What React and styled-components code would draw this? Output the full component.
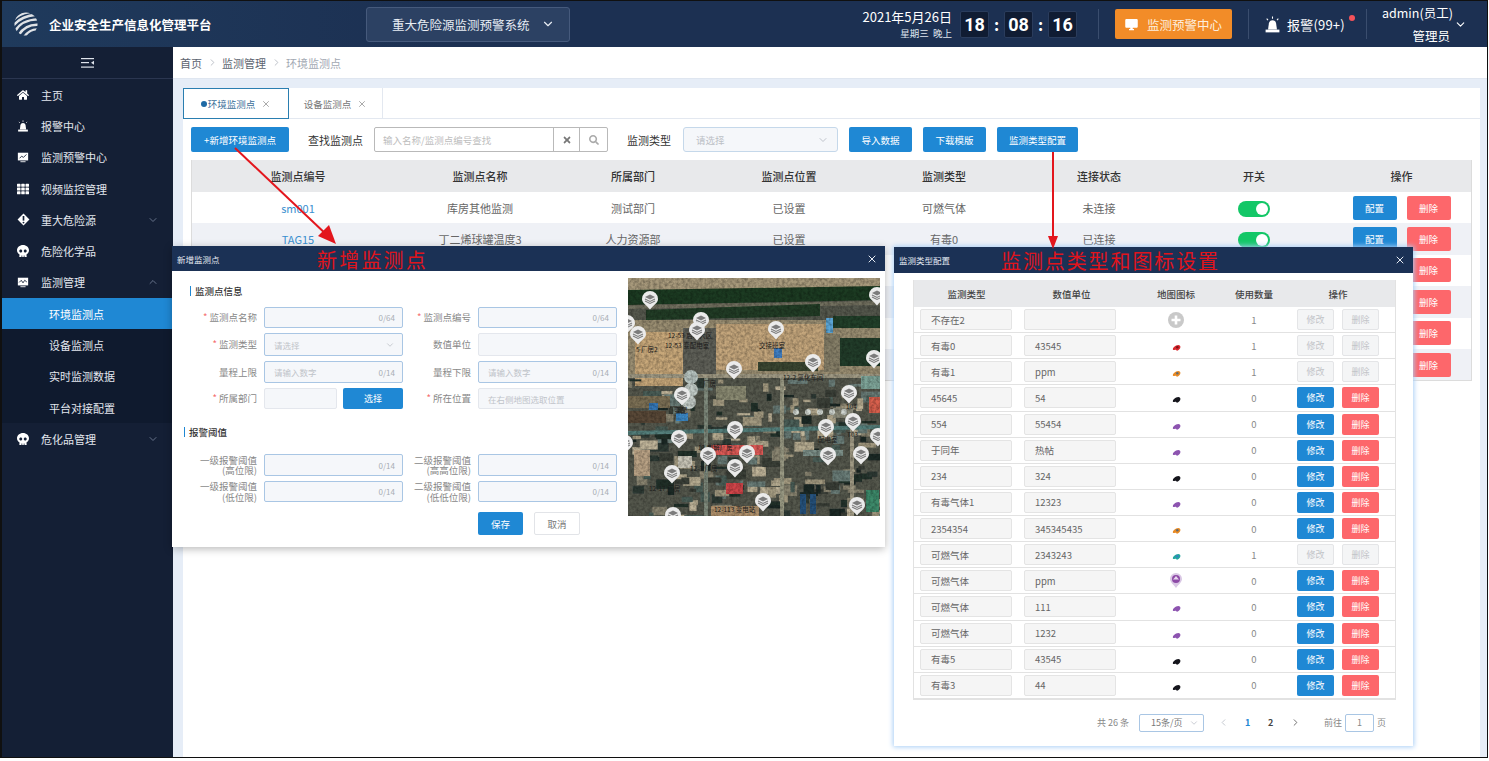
import React from 'react'
import styled, { createGlobalStyle } from 'styled-components'
import { FaHome, FaSkull, FaTh, FaSearch, FaTimes } from 'react-icons/fa'
import { FiChevronDown, FiChevronUp, FiChevronLeft, FiChevronRight, FiX } from 'react-icons/fi'
import { MdDesktopWindows } from 'react-icons/md'

const GlobalStyle = createGlobalStyle`
  html, body {
    margin: 0;
    padding: 0;
    background: #fff;
    font-family: "Noto Sans CJK SC", "Noto Sans", sans-serif;
  }
  * { box-sizing: border-box; }
`

const blue = '#1f88d4'
const red = '#fd676b'
const navy = '#1b3155'

const Frame = styled.div`
  position: relative;
  width: 1488px;
  height: 758px;
  border: 1px solid #101010;
  border-left-width: 2px;
  overflow: hidden;
  background: #e6edf7;
  display: flex;
  flex-direction: column;
`

/* ---------- top bar ---------- */
const TopBar = styled.header`
  height: 46px;
  flex: none;
  display: flex;
  align-items: center;
  background: linear-gradient(90deg, #1f3a5c 0%, #1c3052 30%, #1c3052 100%);
  color: #fff;
`
const Brand = styled.div`
  width: 364px;
  display: flex;
  align-items: center;
  gap: 11px;
  padding-left: 12px;
  font-size: 12.5px;
  font-weight: 700;
`
const SystemPicker = styled.div`
  width: 204px;
  height: 35px;
  display: flex;
  align-items: center;
  justify-content: space-between;
  padding: 0 14px 0 25px;
  font-size: 12.5px;
  background: #2c4163;
  border: 1px solid #465a7c;
  border-radius: 3px;
  color: #e8edf4;
`
const TopRight = styled.div`
  margin-left: auto;
  display: flex;
  align-items: center;
  height: 100%;
`
const DateBlock = styled.div`
  width: 90px;
  text-align: right;
  line-height: 1;
`
const DateText = styled.div`
  font-size: 13px;
  white-space: nowrap;
`
const WeekText = styled.div`
  font-size: 9.5px;
  margin-top: 6px;
  color: #dfe5ee;
`
const Clock = styled.div`
  display: flex;
  align-items: center;
  margin-left: 8px;
  margin-right: 21px;
`
const Digit = styled.span`
  width: 29px;
  height: 27px;
  display: flex;
  align-items: center;
  justify-content: center;
  background: #101c33;
  border: 1px solid #2a3c5c;
  border-radius: 2px;
  font-family: "Roboto", sans-serif;
  font-size: 18px;
  font-weight: 700;
`
const Colon = styled.span`
  width: 15px;
  text-align: center;
  font-size: 16px;
  font-weight: 700;
`
const Divider = styled.span`
  width: 1px;
  height: 30px;
  background: #3a4d6e;
`
const AlarmCenter = styled.div`
  width: 117px;
  height: 30px;
  margin: 0 16px;
  display: flex;
  align-items: center;
  gap: 8px;
  padding-left: 9px;
  background: #f28c28;
  border-radius: 2px;
  font-size: 12.5px;
  color: #fdeedd;
`
const AlarmBadge = styled.div`
  position: relative;
  width: 117px;
  display: flex;
  align-items: center;
  gap: 6px;
  padding-left: 15px;
  font-size: 13px;
  letter-spacing: 0.2px;
  &::after {
    content: '';
    position: absolute;
    left: 100px;
    top: 0;
    width: 6px;
    height: 6px;
    border-radius: 50%;
    background: #f4525a;
  }
`
const UserBox = styled.div`
  width: 120px;
  padding-left: 15px;
  display: flex;
  align-items: center;
  gap: 4px;
`
const UserNames = styled.div`
  width: 68px;
  font-size: 12.5px;
  text-align: right;
  line-height: 23px;
  white-space: nowrap;
`

/* ---------- page body ---------- */
const Body = styled.div`
  flex: 1;
  display: flex;
  min-height: 0;
`
const Sidebar = styled.nav`
  width: 171px;
  flex: none;
  background: #141f35;
  color: #e3e7ee;
`
const Collapse = styled.div`
  height: 32px;
  display: flex;
  align-items: center;
  justify-content: center;
  border-bottom: 1px solid #2b3650;
`
const MenuItem = styled.div`
  height: 31.3px;
  display: flex;
  align-items: center;
  padding-left: ${p => (p.$sub ? 47 : 15)}px;
  padding-right: 14px;
  font-size: 11px;
  background: ${p => (p.$active ? blue : p.$sub ? '#0f1a2e' : 'transparent')};
  color: ${p => (p.$active ? '#fff' : '#e3e7ee')};
`
const MenuIcon = styled.span`
  width: 24px;
  display: flex;
  align-items: center;
  font-size: 12px;
  color: #fff;
`
const MenuArrow = styled.span`
  margin-left: auto;
  display: flex;
  color: #66728a;
  font-size: 12px;
`
const Main = styled.main`
  flex: 1;
  min-width: 0;
  display: flex;
  flex-direction: column;
`
const Breadcrumb = styled.div`
  height: 32px;
  flex: none;
  background: #fff;
  display: flex;
  align-items: center;
  gap: 4.5px;
  padding-left: 7px;
  font-size: 11px;
  color: #5c6470;
  border-bottom: 1px solid #dfe6f0;
`
const Crumb = styled.span`
  color: ${p => (p.$last ? '#a2a8b2' : '#5c6470')};
`
const Sep = styled.span`
  display: flex;
  color: #b8bcc4;
  font-size: 11px;
`
const Content = styled.div`
  flex: 1;
  margin: 9px 7px 0 10px;
  display: flex;
  flex-direction: column;
  min-height: 0;
`
const TabBar = styled.div`
  height: 31px;
  flex: none;
  display: flex;
  background: #fff;
  border-bottom: 1px solid #e3e8f0;
`
const Tab = styled.div`
  width: ${p => p.$w}px;
  height: 31px;
  display: flex;
  align-items: center;
  justify-content: center;
  gap: 6px;
  font-size: 9.5px;
  color: ${p => (p.$active ? '#3b6f99' : '#777')};
  border: ${p => (p.$active ? '1px solid #2a7eb0' : 'none')};
  border-right: 1px solid ${p => (p.$active ? '#2a7eb0' : '#e3e8f0')};
  svg { color: #999; font-size: 10px; }
  &::before {
    content: '';
    display: ${p => (p.$active ? 'block' : 'none')};
    width: 6px;
    height: 6px;
    margin-right: -5px;
    border-radius: 50%;
    background: #1f6aa5;
  }
`
const Panel = styled.section`
  flex: 1;
  background: #fff;
  padding: 8px 9px 0 8px;
`
const Toolbar = styled.div`
  height: 25px;
  display: flex;
  align-items: center;
`
const Btn = styled.button`
  width: ${p => p.$w}px;
  height: ${p => p.$h || 25}px;
  flex: none;
  margin-left: ${p => p.$ml || 0}px;
  padding: 0;
  border: none;
  border-radius: 2px;
  background: ${p => (p.$danger ? red : blue)};
  color: #fff;
  font-family: inherit;
  font-size: ${p => p.$fs || 9.5}px;
  visibility: ${p => (p.$hidden ? 'hidden' : 'visible')};
`
const GhostBtn = styled(Btn)`
  background: #f4f5f6;
  color: #c2c4c8;
  border: 1px solid #e4e5e7;
`
const ToolLabel = styled.span`
  margin-left: ${p => p.$ml}px;
  width: ${p => p.$w}px;
  flex: none;
  font-size: 11px;
  color: #333;
  white-space: nowrap;
`
const SearchBox = styled.div`
  width: 234px;
  height: 25px;
  display: flex;
  border: 1px solid #b9b9b9;
  border-radius: 2px;
`
const SearchInput = styled.div`
  flex: 1;
  display: flex;
  align-items: center;
  padding-left: 8px;
  font-size: 9.5px;
  color: #bdbdbd;
`
const SearchAddon = styled.div`
  width: ${p => p.$w}px;
  display: flex;
  align-items: center;
  justify-content: center;
  border-left: 1px solid #b9b9b9;
  color: ${p => p.$c};
  font-size: 10px;
`
const TypeSelect = styled.div`
  width: 155px;
  height: 25px;
  margin-left: 12px;
  display: flex;
  align-items: center;
  justify-content: space-between;
  padding: 0 8px 0 12px;
  background: #f5f7fa;
  border: 1px solid #c5d8ea;
  border-radius: 3px;
  font-size: 9.5px;
  color: #bcc0c6;
  svg { font-size: 12px; }
`
const MonitorTable = styled.div`
  margin-top: 8px;
  border: 1px solid #dcdcdc;
  border-top: none;
  width: 1281px;
`
const MonitorRow = styled.div`
  display: grid;
  grid-template-columns: 212px 152px 154px 158px 152px 158px 152px 143px;
  height: ${p => (p.$head ? 32 : 31.4)}px;
  align-items: center;
  text-align: center;
  font-size: 11px;
  font-weight: ${p => (p.$head ? 500 : 400)};
  color: ${p => (p.$head ? '#333' : '#666')};
  background: ${p => (p.$head ? '#e8e9eb' : p.$alt ? '#eff1f6' : '#fff')};
`
const LinkCell = styled.span`
  color: #3a8fcf;
`
const Actions = styled.div`
  display: flex;
  justify-content: center;
  gap: 10px;
`
const Toggle = styled.span`
  display: inline-block;
  position: relative;
  width: 32px;
  height: 16px;
  border-radius: 8px;
  background: #13c767;
  vertical-align: middle;
  &::after {
    content: '';
    position: absolute;
    right: 2px;
    top: 2px;
    width: 12px;
    height: 12px;
    border-radius: 50%;
    background: #fff;
  }
`

/* ---------- dialogs ---------- */
const Dialog = styled.div`
  position: absolute;
  left: ${p => p.$x}px;
  top: ${p => p.$y}px;
  width: ${p => p.$w}px;
  height: ${p => p.$h}px;
  background: #fff;
  box-shadow: ${p => p.$glow ? '0 0 5px 1px #a9cff6' : '0 2px 8px rgba(0,0,0,.28)'};
  display: flex;
  flex-direction: column;
  z-index: 2;
`
const DialogHead = styled.div`
  height: ${p => p.$h}px;
  flex: none;
  position: relative;
  display: flex;
  align-items: center;
  padding: 0 7px 0 5px;
  background: ${navy};
  color: #e6ebf2;
  font-size: 8.5px;
  svg { margin-left: auto; font-size: 12px; color: #e8edf4; }
`
const Annotation = styled.span`
  position: absolute;
  left: ${p => p.$x}px;
  top: 50%;
  transform: translateY(-50%);
  font-size: 20px;
  letter-spacing: ${p => p.$ls}px;
  color: #e0141c;
  white-space: nowrap;
`
const FormBody = styled.div`
  flex: 1;
  display: flex;
`
const FormLeft = styled.div`
  width: 456px;
  padding-left: 12px;
`
const SectionTitle = styled.div`
  height: 10px;
  margin-top: ${p => p.$mt}px;
  margin-left: ${p => p.$ml}px;
  padding-left: 4px;
  display: flex;
  align-items: center;
  border-left: 1px solid ${blue};
  font-size: 9.5px;
  font-weight: 500;
  color: #333;
`
const FormGrid = styled.div`
  display: grid;
  grid-template-columns: 73px 139px 61px 139px;
  column-gap: 7px;
  row-gap: 5px;
  margin-top: ${p => p.$mt}px;
`
const FieldLabel = styled.label`
  align-self: center;
  text-align: right;
  font-size: 9.5px;
  line-height: 10.5px;
  color: #888;
  white-space: pre-line;
  &::before {
    content: '* ';
    display: ${p => (p.$req ? 'inline' : 'none')};
    color: #f56c6c;
  }
`
const Field = styled.div`
  height: ${p => p.$h}px;
  display: flex;
  align-items: center;
  justify-content: space-between;
  padding: 0 7px 0 9px;
  background: #f5f7fa;
  border: 1px solid ${p => (p.$plain ? '#e4e7ed' : '#a9c6e4')};
  border-radius: 2px;
  font-size: 8.5px;
  color: #bfc3c9;
  svg { font-size: 10px; }
`
const DeptField = styled(Field)`
  flex: 1;
`
const Count = styled.span`
  margin-left: auto;
  font-size: 8px;
  color: #a8adb4;
`
const DeptCell = styled.div`
  display: flex;
  gap: 6px;
`
const FormFoot = styled.div`
  display: flex;
  gap: 11px;
  margin-top: 10px;
  padding-left: 294px;
`
const CancelBtn = styled(Btn)`
  background: #fff;
  border: 1px solid #e2e4e8;
  color: #777;
`
const MapWrap = styled.div`
  width: 252px;
  height: 238px;
  margin-top: 7px;
  svg { display: block; }
`
const ConfigBody = styled.div`
  flex: 1;
  padding: 7px 17px 0 19px;
`
const ConfigTable = styled.div`
  width: 483px;
  border: 1px solid #e2e2e2;
  border-top: none;
`
const ConfigRow = styled.div`
  display: grid;
  grid-template-columns: 105px 105px 104px 52px 116px;
  align-items: center;
  height: ${p => (p.$head ? 27 : 26.14)}px;
  font-size: 9.5px;
  text-align: center;
  color: ${p => (p.$head ? '#444' : '#888')};
  font-weight: ${p => (p.$head ? 500 : 400)};
  background: ${p => (p.$head ? '#e8e9eb' : '#fff')};
  border-bottom: ${p => (p.$head ? 'none' : '1px solid #e2e2e2')};
`
const CellInput = styled.div`
  width: 92px;
  height: 21px;
  margin-left: 6px;
  display: flex;
  align-items: center;
  padding-left: 10px;
  background: #f5f5f5;
  border: 1px solid #e4e4e4;
  border-radius: 2px;
  color: #666;
  font-size: 9.5px;
`
const CellInputNext = styled(CellInput)`
  margin-left: 5px;
`
const IconCell = styled.div`
  display: flex;
  justify-content: center;
  padding-top: ${p => (p.$low ? 5 : 0)}px;
`
const ConfigActions = styled.div`
  display: flex;
  gap: 8px;
  padding-left: 17px;
`
const Pager = styled.div`
  display: flex;
  align-items: center;
  margin-top: 14px;
  padding-left: 184px;
  font-size: 9px;
  color: #888;
`
const PageSelect = styled.div`
  width: 65px;
  height: 18px;
  margin-left: 10px;
  display: flex;
  align-items: center;
  justify-content: space-between;
  padding: 0 4px 0 11px;
  border: 1px solid #a9c6e4;
  border-radius: 2px;
  color: #777;
  svg { color: #c0c4cc; }
`
const PageNum = styled.span`
  width: 23px;
  text-align: center;
  font-weight: 700;
  color: ${p => (p.$on ? blue : '#444')};
`
const PageArrow = styled.span`
  width: 26px;
  margin-left: ${p => p.$ml || 0}px;
  display: flex;
  justify-content: center;
  color: ${p => (p.$off ? '#c0c4cc' : '#666')};
  font-size: 11px;
`
const GoTo = styled.span`
  margin-left: 16px;
`
const PageInput = styled.div`
  width: 29px;
  height: 18px;
  margin: 0 3px;
  display: flex;
  align-items: center;
  justify-content: center;
  border: 1px solid #a9c6e4;
  border-radius: 2px;
`
const ArrowLayer = styled.svg`
  position: absolute;
  left: -2px;
  top: -1px;
  width: 1489px;
  height: 761px;
  pointer-events: none;
  z-index: 3;
`

/* ---------- drawn icons ---------- */
const Logo = () => (
  <svg width="24" height="24" viewBox="0 0 26 26">
    <defs>
      <clipPath id="globe"><circle cx="13" cy="13" r="12.500" /></clipPath>
    </defs>
    <g clipPath="url(#globe)" fill="none" stroke="#dfe2e6" strokeWidth="2.600">
      <path d="M-1 9C4 3 10 1 17 0" />
      <path d="M-1 15C5 7 13 4 24 3" />
      <path d="M1 21C6 12 15 8 27 8" />
      <path d="M5 25C10 17 18 13 28 14" />
      <path d="M11 27C15 21 21 18 28 19" />
    </g>
  </svg>
)
const Siren = ({ size = 12 }) => (
  <svg width={size} height={size} viewBox="0 0 16 16" fill="#fff">
    <path d="M3.800 12.800 4.600 7C4.900 5 6.200 4 8 4s3.100 1 3.400 3l.8 5.800z" />
    <rect x="1.500" y="12.800" width="13" height="2.600" />
    <path d="M8 .5v2M2.500 2.500l1.300 1.300M13.500 2.500l-1.300 1.300" stroke="#fff" strokeWidth="1" />
  </svg>
)
const ScreenChart = ({ wave }) => (
  <svg width="12" height="12" viewBox="0 0 14 14">
    <path d="M1 2h12v9H1z" fill="#fff" />
    <path d="M4 12.500h6" stroke="#fff" />
    <path d={wave ? 'M2.500 7.500 5 5l2 3 2-3 2.500 2' : 'M3 8.500 5.500 6l2 1.500L11 4'} fill="none" stroke="#141f35" strokeWidth="1" />
  </svg>
)
const Hazard = () => (
  <svg width="13" height="13" viewBox="0 0 14 14">
    <path d="M7 .6 13.400 7 7 13.400.6 7z" fill="#fff" />
    <path d="M7 3.200v5" stroke="#141f35" strokeWidth="1.800" />
    <circle cx="7" cy="10.300" r="1" fill="#141f35" />
  </svg>
)
const CollapseIcon = () => (
  <svg width="14" height="12" viewBox="0 0 14 12" fill="#dfe4ec">
    <rect y="1" width="13" height="1.200" />
    <rect y="5" width="8" height="1.200" />
    <rect y="9.500" width="13" height="1.200" />
    <path d="M13 3.800v4L10 5.800z" />
  </svg>
)
const Blob = ({ color, accent }) => (
  <svg width="9" height="8" viewBox="0 0 11 9">
    <path d="M1 6C1 4 3 3 5 1.500c2-1 4-1 5 .5S9.500 6 8 7 6 8.500 5 7 1 8 1 6z" fill={color} />
    {accent && <circle cx="6.500" cy="3.500" r="1.500" fill={accent} />}
  </svg>
)
const PlusBadge = () => (
  <svg width="16" height="16" viewBox="0 0 16 16">
    <circle cx="8" cy="8" r="8" fill="#c9c9c9" />
    <path d="M8 3.500v9M3.500 8h9" stroke="#fff" strokeWidth="2.600" />
  </svg>
)
const PurplePin = () => (
  <svg width="12" height="15" viewBox="0 0 12 15">
    <path d="M6 0a6 6 0 0 1 6 6c0 3-3 5-6 9-3-4-6-6-6-9a6 6 0 0 1 6-6z" fill="#d9c7e4" />
    <circle cx="6" cy="6" r="4" fill="#8d4aa6" />
    <path d="M6 3 9 6.500H3z" fill="#e8d8ef" />
  </svg>
)

/* map picture: fixed seed so the scatter of plant buildings stays the same */
let seed = 11
const rnd = () => {
  seed = (seed * 16807) % 2147483647
  return seed / 2147483647
}
const palette = ['#2e3a36', '#3a3f38', '#8b8672', '#a39a80', '#4c5e58', '#23302c', '#b5ab90', '#6b7d78', '#1f2a27', '#c0b59a']
const clutter = Array.from({ length: 230 }, () => ({
  x: rnd() * 252,
  y: 100 + rnd() * 138,
  w: 3 + rnd() * 17,
  h: 2 + rnd() * 9,
  c: palette[Math.floor(rnd() * palette.length)],
}))
const pins = [
  [22, 21], [73, 42], [69, 52], [148, 51], [10, 56], [-1, 45], [106, 91], [185, 84],
  [246, 80], [249, 17], [54, 117], [221, 115], [225, 143], [198, 149], [107, 151],
  [51, 160], [80, 177], [119, 175], [200, 177], [233, 176], [250, 158], [44, 195],
  [107, 189], [135, 223], [229, 227], [45, 237], [-3, 165],
]
const roofs = [
  [83, 167, 52, 10, '#dc5a56'], [98, 205, 17, 11, '#d0454a'], [241, 119, 11, 16, '#d8604e'],
  [198, 40, 7, 15, '#5aa5d6'], [146, 70, 8, 10, '#3f7fc4'],
  [21, 125, 9, 7, '#3578b8'], [48, 135, 12, 8, '#3e8ac8'], [233, 98, 19, 13, '#7fa69a'],
  [6, 172, 16, 26, '#b9a285'], [50, 178, 14, 12, '#c9c6b8'], [175, 172, 40, 6, '#7c8f88'],
  [88, 108, 30, 14, '#8a8a72'], [205, 130, 20, 10, '#8a8a7a'], [238, 212, 13, 22, '#3d8a6b'],
  [83, 228, 48, 10, '#b0916c'], [172, 216, 6, 20, '#27527e'], [182, 216, 6, 20, '#27527e'],
]
const mapLabels = [
  [40, 60, '12-53 启动大区'], [37, 70, '12-53 变配电室'], [131, 70, '交接班室'],
  [155, 102, '12-2 氯化车间'], [8, 74, '5 厂房2'], [75, 108, '厂房'],
  [46, 135, '变配'], [190, 164, '配电室'], [218, 131, '104'], [219, 159, 'T03'],
  [70, 172, '12 电解厂房'], [62, 193, '12-3 厂房'], [21, 213, '12-17 厂房'],
  [86, 234, '12-113 变电站'],
]
const PlantMap = () => (
  <svg width="252" height="238" viewBox="0 0 252 238">
    <defs>
      <filter id="soft"><feGaussianBlur stdDeviation="0.6" /></filter>
      <filter id="grain">
        <feTurbulence type="fractalNoise" baseFrequency="0.35" numOctaves="3" seed="4" />
        <feColorMatrix values="0 0 0 0 0  0 0 0 0 0  0 0 0 0 0  0 0 0 1.600 -0.500" />
      </filter>
      <clipPath id="mapclip"><rect width="252" height="238" /></clipPath>
    </defs>
    <g clipPath="url(#mapclip)">
      <g filter="url(#soft)">
        <rect width="252" height="238" fill="#55584e" />
        <rect width="252" height="14" fill="#a89a7c" />
        <path d="M0 12 252 8v14L0 27z" fill="#1c3a20" />
        <path d="M0 27 252 23v4L0 31z" fill="#72705f" />
        <path d="M18 32 192 26v12L18 42z" fill="#203e25" />
        <rect x="0" y="42" width="252" height="56" fill="#9a8e72" />
        <rect x="7" y="54" width="48" height="54" fill="#c8a87a" />
        <rect x="88" y="46" width="108" height="46" fill="#c4a67b" />
        <rect x="55" y="50" width="33" height="50" fill="#5e6158" />
        <rect x="205" y="38" width="47" height="12" fill="#243f2b" />
        <rect x="212" y="60" width="40" height="28" fill="#233d2a" />
        <rect x="130" y="84" width="60" height="9" fill="#3a4630" />
        <rect x="196" y="56" width="16" height="38" fill="#867f67" />
        {clutter.map((b, i) => <rect key={i} x={b.x} y={b.y} width={b.w} height={b.h} fill={b.c} />)}
        <rect y="96" width="252" height="4" fill="#a09a84" />
        <path d="M0 153 252 147v4L0 157z" fill="#55807c" />
        <rect x="76" y="100" width="4" height="138" fill="#7f8a7c" />
        <rect x="152" y="100" width="4" height="138" fill="#9a9a84" />
        <rect x="222" y="150" width="4" height="88" fill="#a09a84" />
        <rect x="0" y="118" width="42" height="12" fill="#7c6f55" />
        <rect x="0" y="133" width="38" height="12" fill="#5a4a38" />
        {roofs.map(([x, y, w, h, c], i) => <rect key={i} x={x} y={y} width={w} height={h} fill={c} />)}
        <circle cx="63" cy="99" r="7" fill="#b9c6c2" />
        <circle cx="63" cy="112" r="7" fill="#c3cdc8" />
        <circle cx="61" cy="124" r="7" fill="#c6cec9" />
        {[0, 1, 2, 3, 4].map(i => <circle key={i} cx={168 + i * 12} cy={134} r="3" fill="#d4dad4" />)}
      </g>
      <rect width="252" height="238" filter="url(#grain)" opacity=".35" />
      {mapLabels.map(([x, y, t]) => (
        <text key={t} x={x} y={y} fontSize="6.500" fill="#1c1c1c" fontFamily="Noto Sans CJK SC, sans-serif">{t}</text>
      ))}
      {pins.map(([x, y], i) => (
        <g key={i} transform={`translate(${x} ${y})`}>
          <path d="M-8 0a8 8 0 0 1 16 0c0 4-4.500 6-8 10.500C-3.500 6-8 4-8 0z" fill="#ebebeb" />
          <path d="M0-4.500 5-2 0 .5-5-2z" fill="#7c7c7c" />
          <path d="M-5 0 0 2.500 5 0M-5 2 0 4.500 5 2" fill="none" stroke="#7c7c7c" strokeWidth="1.100" />
        </g>
      ))}
    </g>
  </svg>
)

/* ---------- data ---------- */
const menu = [
  { label: '主页', icon: <FaHome /> },
  { label: '报警中心', icon: <Siren /> },
  { label: '监测预警中心', icon: <ScreenChart /> },
  { label: '视频监控管理', icon: <FaTh /> },
  { label: '重大危险源', icon: <Hazard />, arrow: 'down' },
  { label: '危险化学品', icon: <FaSkull /> },
  { label: '监测管理', icon: <ScreenChart wave />, arrow: 'up' },
  { label: '环境监测点', sub: true, active: true },
  { label: '设备监测点', sub: true },
  { label: '实时监测数据', sub: true },
  { label: '平台对接配置', sub: true },
  { label: '危化品管理', icon: <FaSkull />, arrow: 'down' },
]
const columns = ['监测点编号', '监测点名称', '所属部门', '监测点位置', '监测类型', '连接状态', '开关', '操作']
const points = [
  ['sm001', '库房其他监测', '测试部门', '已设置', '可燃气体', '未连接'],
  ['TAG15', '丁二烯球罐温度3', '人力资源部', '已设置', '有毒0', '已连接'],
  [], [], [], [],
]
const black = <Blob color="#15151c" />
const purple = <Blob color="#8d54b0" />
const types = [
  ['不存在2', '', <PlusBadge />, 1],
  ['有毒0', '43545', <Blob color="#d8262c" accent="#7a1418" />, 1],
  ['有毒1', 'ppm', <Blob color="#e88a24" accent="#5f6a72" />, 1],
  ['45645', '54', black, 0],
  ['554', '55454', purple, 0],
  ['于同年', '热帖', purple, 0],
  ['234', '324', black, 0],
  ['有毒气体1', '12323', purple, 0],
  ['2354354', '345345435', <Blob color="#e88a24" accent="#5f6a72" />, 0],
  ['可燃气体', '2343243', <Blob color="#22a6a0" accent="#3a7fc0" />, 1],
  ['可燃气体', 'ppm', <PurplePin />, 0],
  ['可燃气体', '111', purple, 0],
  ['可燃气体', '1232', purple, 0],
  ['有毒5', '43545', black, 0],
  ['有毒3', '44', black, 0],
]

const Req = ({ children, label, req }) => (
  <>
    <FieldLabel $req={req}>{label}</FieldLabel>
    {children}
  </>
)

export default function App() {
  return (
    <>
      <GlobalStyle />
      <Frame>
        <TopBar>
          <Brand><Logo />企业安全生产信息化管理平台</Brand>
          <SystemPicker>重大危险源监测预警系统<FiChevronDown size={14} /></SystemPicker>
          <TopRight>
            <DateBlock>
              <DateText>2021年5月26日</DateText>
              <WeekText>星期三&nbsp;&nbsp;晚上</WeekText>
            </DateBlock>
            <Clock>
              <Digit>18</Digit><Colon>:</Colon>
              <Digit>08</Digit><Colon>:</Colon>
              <Digit>16</Digit>
            </Clock>
            <Divider />
            <AlarmCenter><MdDesktopWindows size={15} color="#fff" />监测预警中心</AlarmCenter>
            <Divider />
            <AlarmBadge><Siren size={17} />报警(99+)</AlarmBadge>
            <Divider />
            <UserBox>
              <UserNames>admin(员工)<br />管理员</UserNames>
              <FiChevronDown size={13} />
            </UserBox>
          </TopRight>
        </TopBar>

        <Body>
          <Sidebar>
            <Collapse><CollapseIcon /></Collapse>
            {menu.map(m => (
              <MenuItem key={m.label} $sub={m.sub} $active={m.active}>
                {m.icon && <MenuIcon>{m.icon}</MenuIcon>}
                {m.label}
                {m.arrow && <MenuArrow>{m.arrow === 'up' ? <FiChevronUp /> : <FiChevronDown />}</MenuArrow>}
              </MenuItem>
            ))}
          </Sidebar>

          <Main>
            <Breadcrumb>
              <Crumb>首页</Crumb><Sep><FiChevronRight /></Sep>
              <Crumb>监测管理</Crumb><Sep><FiChevronRight /></Sep>
              <Crumb $last>环境监测点</Crumb>
            </Breadcrumb>
            <Content>
              <TabBar>
                <Tab $active $w={106}>环境监测点<FiX /></Tab>
                <Tab $w={94}>设备监测点<FiX /></Tab>
              </TabBar>
              <Panel>
                <Toolbar>
                  <Btn $w={98}>+新增环境监测点</Btn>
                  <ToolLabel $ml={19} $w={66}>查找监测点</ToolLabel>
                  <SearchBox>
                    <SearchInput>输入名称/监测点编号查找</SearchInput>
                    <SearchAddon $w={26} $c="#777"><FaTimes /></SearchAddon>
                    <SearchAddon $w={28} $c="#aaa"><FaSearch /></SearchAddon>
                  </SearchBox>
                  <ToolLabel $ml={19} $w={44}>监测类型</ToolLabel>
                  <TypeSelect>请选择<FiChevronDown color="#c0c4cc" /></TypeSelect>
                  <Btn $w={63} $ml={11}>导入数据</Btn>
                  <Btn $w={63} $ml={11}>下载模版</Btn>
                  <Btn $w={81} $ml={11}>监测类型配置</Btn>
                </Toolbar>
                <MonitorTable>
                  <MonitorRow $head>
                    {columns.map(c => <span key={c}>{c}</span>)}
                  </MonitorRow>
                  {points.map((p, i) => (
                    <MonitorRow key={i} $alt={i % 2 === 1}>
                      <LinkCell>{p[0]}</LinkCell>
                      <span>{p[1]}</span>
                      <span>{p[2]}</span>
                      <span>{p[3]}</span>
                      <span>{p[4]}</span>
                      <span>{p[5]}</span>
                      <span>{p.length > 0 && <Toggle />}</span>
                      <Actions>
                        <Btn $w={44} $h={24} $hidden={p.length === 0}>配置</Btn>
                        <Btn $w={44} $h={24} $danger>删除</Btn>
                      </Actions>
                    </MonitorRow>
                  ))}
                </MonitorTable>
              </Panel>
            </Content>
          </Main>
        </Body>

        <Dialog $x={170} $y={245} $w={713} $h={301}>
          <DialogHead $h={25}>
            新增监测点
            <Annotation $x={145} $ls={2.2}>新增监测点</Annotation>
            <FiX />
          </DialogHead>
          <FormBody>
            <FormLeft>
              <SectionTitle $mt={15} $ml={6}>监测点信息</SectionTitle>
              <FormGrid $mt={11}>
                <Req label="监测点名称" req><Field $h={21}><Count>0/64</Count></Field></Req>
                <Req label="监测点编号" req><Field $h={21}><Count>0/64</Count></Field></Req>
                <Req label="监测类型" req><Field $h={23}>请选择<FiChevronDown /></Field></Req>
                <Req label="数值单位"><Field $h={23} $plain /></Req>
                <Req label="量程上限"><Field $h={22}>请输入数字<Count>0/14</Count></Field></Req>
                <Req label="量程下限"><Field $h={22}>请输入数字<Count>0/14</Count></Field></Req>
                <Req label="所属部门" req>
                  <DeptCell>
                    <DeptField $h={21} $plain />
                    <Btn $w={60} $h={21} $fs={9}>选择</Btn>
                  </DeptCell>
                </Req>
                <Req label="所在位置" req><Field $h={21} $plain>在右侧地图选取位置</Field></Req>
              </FormGrid>
              <SectionTitle $mt={18} $ml={0}>报警阈值</SectionTitle>
              <FormGrid $mt={17}>
                <Req label={'一级报警阈值\n(高位限)'}><Field $h={22}><Count>0/14</Count></Field></Req>
                <Req label={'二级报警阈值\n(高高位限)'}><Field $h={22}><Count>0/14</Count></Field></Req>
                <Req label={'一级报警阈值\n(低位限)'}><Field $h={21}><Count>0/14</Count></Field></Req>
                <Req label={'二级报警阈值\n(低低位限)'}><Field $h={21}><Count>0/14</Count></Field></Req>
              </FormGrid>
              <FormFoot>
                <Btn $w={45} $h={23}>保存</Btn>
                <CancelBtn $w={46} $h={23}>取消</CancelBtn>
              </FormFoot>
            </FormLeft>
            <MapWrap><PlantMap /></MapWrap>
          </FormBody>
        </Dialog>

        <Dialog $x={892} $y={246} $w={519} $h={499} $glow>
          <DialogHead $h={26}>
            监测类型配置
            <Annotation $x={107} $ls={1.9}>监测点类型和图标设置</Annotation>
            <FiX />
          </DialogHead>
          <ConfigBody>
            <ConfigTable>
              <ConfigRow $head>
                <span>监测类型</span><span>数值单位</span><span>地图图标</span><span>使用数量</span><span>操作</span>
              </ConfigRow>
              {types.map((t, i) => {
                const used = t[3] > 0
                const Act = used ? GhostBtn : Btn
                return (
                  <ConfigRow key={i}>
                    <CellInput>{t[0]}</CellInput>
                    <CellInputNext>{t[1]}</CellInputNext>
                    <IconCell $low={t[2].type === Blob}>{t[2]}</IconCell>
                    <span>{t[3]}</span>
                    <ConfigActions>
                      <Act $w={37} $h={21} $fs={9}>修改</Act>
                      <Act $w={37} $h={21} $fs={9} $danger>删除</Act>
                    </ConfigActions>
                  </ConfigRow>
                )
              })}
            </ConfigTable>
            <Pager>
              <span>共 26 条</span>
              <PageSelect>15条/页<FiChevronDown size={10} /></PageSelect>
              <PageArrow $off $ml={6}><FiChevronLeft /></PageArrow>
              <PageNum $on>1</PageNum>
              <PageNum>2</PageNum>
              <PageArrow><FiChevronRight /></PageArrow>
              <GoTo>前往</GoTo>
              <PageInput>1</PageInput>
              <span>页</span>
            </Pager>
          </ConfigBody>
        </Dialog>

        <ArrowLayer viewBox="0 0 1489 761">
          <path d="M235 148 329 237" stroke="#e3161d" strokeWidth="2" fill="none" />
          <path d="M336 244 318 236 329 225z" fill="#e3161d" />
          <path d="M1053 152V238" stroke="#e3161d" strokeWidth="2" fill="none" />
          <path d="M1053 249 1048 236H1058z" fill="#e3161d" />
        </ArrowLayer>
      </Frame>
    </>
  )
}
